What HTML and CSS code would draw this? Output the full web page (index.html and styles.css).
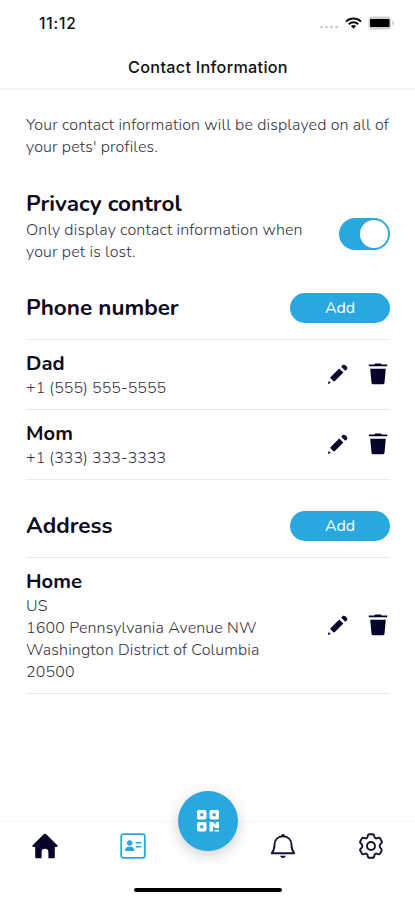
FILE: index.html
```html
<!DOCTYPE html>
<html lang="en">
<head>
<meta charset="utf-8">
<title>Contact Information</title>
<link rel="stylesheet" href="styles.css">
</head>
<body>
<svg class="symbols" aria-hidden="true">
  <symbol id="pencil" viewBox="0 0 22 22">
    <path d="M3.700 13.900 12.200 5.400l4.200 4.200-8.500 8.500a1.200 1.200 0 0 1-1.700 0l-2.500-2.500a1.200 1.200 0 0 1 0-1.700z"/>
    <path d="m14.200 3.700 1.500-1.600c1.800-1.700 6 2.400 4.200 4.200l-1.600 1.500z"/>
    <path d="m.8 21 .9-3 2.100 2.100z"/>
  </symbol>
  <symbol id="trash" viewBox="0 0 20 22">
    <path d="M.8 1.500h5.500L7.200.6h5.600l.9.900h5.500v1.700H.8zM2.200 5.700h15.600l-1.300 14.100a1.700 1.700 0 0 1-1.700 1.500H5.200a1.700 1.700 0 0 1-1.700-1.500z"/>
  </symbol>
</svg>
<div class="screen">
  <header class="header">
    <div class="status">
      <span class="time">11:12</span>
      <div class="signals">
        <svg class="dots" viewBox="0 0 20 4"><circle cx="2.500" cy="2" r="1.300"/><circle cx="7.500" cy="2" r="1.300"/><circle cx="12.500" cy="2" r="1.300"/><circle cx="17.500" cy="2" r="1.300"/></svg>
        <svg class="wifi" viewBox="0 0 17 12"><path d="M1 4.600a10.800 10.800 0 0 1 15 0M3.700 7.200a7 7 0 0 1 9.600 0"/><path class="solid" d="m8.500 11.800-2.600-2.700a3.800 3.800 0 0 1 5.200 0z"/></svg>
        <svg class="battery" viewBox="0 0 27 14"><rect class="shell" x=".5" y=".5" width="22.500" height="13" rx="3.500"/><rect x="2" y="3" width="19.500" height="8" rx="1"/><path class="shell" d="M24.200 4.500c2.400.7 2.400 4.300 0 5z"/></svg>
      </div>
    </div>
    <h1 class="title">Contact Information</h1>
  </header>
  <main class="content">
    <p class="text">Your contact information will be displayed on all of<br>your pets' profiles.</p>
    <section class="privacy">
      <div>
        <h2 class="heading">Privacy control</h2>
        <p class="text">Only display contact information when<br>your pet is lost.</p>
      </div>
      <div class="toggle"><span class="knob"></span></div>
    </section>
    <section class="group">
      <div class="group-head"><h2 class="heading">Phone number</h2><button class="add">Add</button></div>
      <div class="entry">
        <div><h3 class="name">Dad</h3><p class="text number">+1 (555) 555-5555</p></div>
        <div class="actions"><svg class="pencil"><use href="#pencil"/></svg><svg class="trash"><use href="#trash"/></svg></div>
      </div>
      <div class="entry">
        <div><h3 class="name">Mom</h3><p class="text number">+1 (333) 333-3333</p></div>
        <div class="actions"><svg class="pencil"><use href="#pencil"/></svg><svg class="trash"><use href="#trash"/></svg></div>
      </div>
    </section>
    <section class="group address">
      <div class="group-head"><h2 class="heading">Address</h2><button class="add">Add</button></div>
      <div class="entry home">
        <div><h3 class="name">Home</h3><p class="text">US<br>1600 Pennsylvania Avenue NW<br>Washington District of Columbia<br>20500</p></div>
        <div class="actions"><svg class="pencil"><use href="#pencil"/></svg><svg class="trash"><use href="#trash"/></svg></div>
      </div>
    </section>
  </main>
  <nav class="tabs">
    <div class="tab-row">
      <svg class="tab" viewBox="0 0 26 26"><path fill="#06042b" d="M12 1.100a1.500 1.500 0 0 1 2 0l11.300 11.200c.7.700.3 1.600-.7 1.600h-1.800v10c0 .9-.5 1.400-1.400 1.400h-5v-6.100a3.400 3.400 0 0 0-6.800 0v6.100h-5c-.9 0-1.400-.5-1.400-1.400v-10H1.400c-1 0-1.400-.9-.7-1.600z"/></svg>
      <svg class="tab blue" viewBox="0 0 26 26"><rect x="1.200" y="1.200" width="23.600" height="23.600" rx="2" fill="none" stroke="currentColor" stroke-width="1.800"/><circle cx="9.700" cy="9.900" r="2.700"/><path d="M5 18c0-2.600 1.600-4.400 4.700-4.400s4.700 1.800 4.700 4.400z"/><path d="M15.700 9h5.600v1.600h-5.600zm0 3.900h5.600v1.500h-5.600z"/></svg>
      <div class="scan">
        <svg viewBox="0 0 24 24"><path fill="#fff" fill-rule="evenodd" d="M3 1h5.500a2 2 0 0 1 2 2v5.500a2 2 0 0 1-2 2H3a2 2 0 0 1-2-2V3a2 2 0 0 1 2-2zm1.300 3.300v2.900h2.900V4.300zM15.500 1H21a2 2 0 0 1 2 2v5.500a2 2 0 0 1-2 2h-5.500a2 2 0 0 1-2-2V3a2 2 0 0 1 2-2zm1.300 3.300v2.900h2.900V4.300zM3 13h5.500a2 2 0 0 1 2 2v5.500a2 2 0 0 1-2 2H3a2 2 0 0 1-2-2V15a2 2 0 0 1 2-2zm1.300 3.300v2.900h2.900v-2.900zM13.500 13h3.500l2.700 3V13H23v6.300h-3.200l-2.800-2v5.200h-3.500zM18.500 20.900H23v1.700h-4.500z"/></svg>
      </div>
      <svg class="tab line" viewBox="0 0 26 26"><path d="M1.700 20.300h22.600c-2.800-3.100-2.700-5.600-2.800-8.500-.2-5-3.500-8.500-8.500-8.500s-8.300 3.500-8.500 8.500c-.1 2.900 0 5.400-2.800 8.500z"/><path class="fill" d="M11 3a2 2 0 0 1 4 0zM10.100 22.700h5.800a3 3 0 0 1-5.800 0z"/></svg>
      <svg class="tab line" viewBox="0 0 26 26"><path d="M9.600 3.700C9.800 1.900 10.500 1.200 11.500 1.200h3c1 0 1.700.7 1.900 2.500.2 1.400 1.400 2.100 2.700 1.500 1.700-.7 2.600-.4 3.100.4l1.500 2.600c.5.900.2 1.800-1.200 2.900-1.100.9-1.100 2.900 0 3.800 1.400 1.100 1.700 2 1.200 2.900l-1.500 2.600c-.5.800-1.400 1.100-3.100.4-1.300-.6-2.500.1-2.700 1.500-.2 1.800-.9 2.500-1.900 2.500h-3c-1 0-1.700-.7-1.900-2.500-.2-1.400-1.400-2.100-2.700-1.500-1.700.7-2.600.4-3.100-.4l-1.500-2.600c-.5-.9-.2-1.800 1.200-2.900 1.100-.9 1.100-2.900 0-3.800C2.100 10 1.800 9.100 2.300 8.200l1.500-2.600c.5-.8 1.400-1.100 3.100-.4 1.300.6 2.500-.1 2.700-1.500z"/><circle cx="13" cy="13" r="4"/></svg>
    </div>
    <div class="home-bar"></div>
  </nav>
</div>
</body>
</html>
```
FILE: styles.css
```css
* { box-sizing: border-box; }
body, h1, h2, h3, p { margin: 0; }
body { background: #fff; color: #0d0b20; font-family: Nunito, Lato, sans-serif; }
.symbols { position: absolute; width: 0; height: 0; }
svg { display: block; flex: none; }
.screen { width: 415px; height: 900px; display: flex; flex-direction: column; background: #fefefe; overflow: hidden; }

.header { height: 90px; border-bottom: 2px solid #f5f5f5; font-family: Inter, sans-serif; color: #111; flex: none; }
.status { height: 46px; padding: 0 20px 0 39px; display: flex; justify-content: space-between; align-items: center; }
.time { font-size: 15.5px; font-weight: 500; letter-spacing: .8px; }
.signals { display: flex; align-items: center; gap: 6px; }
.dots { width: 20px; height: 4px; margin-top: 8px; fill: #c8c8c8; }
.wifi { width: 17px; height: 12px; fill: none; stroke: #111; stroke-width: 2; }
.wifi .solid { fill: #111; stroke: none; }
.battery { width: 27px; height: 14px; fill: #000; }
.battery .shell { fill: #cfcfcf; }
.title { padding-left: 1px; font-size: 16.2px; line-height: 42px; font-weight: 500; text-align: center; letter-spacing: .3px; }

.content { flex: 1; padding: 24px 25px 0 26px; }
.text { font-size: 16px; line-height: 22px; font-weight: 300; color: #353344; white-space: nowrap; letter-spacing: .14px; }
.number { letter-spacing: .04px; }
.privacy { margin-top: 32px; display: flex; justify-content: space-between; }
.heading { font-size: 22.5px; line-height: 28px; font-weight: 700; white-space: nowrap; }
.privacy .text { margin-top: 1px; }
.toggle { width: 51px; height: 32px; margin-top: 28px; padding: 2px; border-radius: 16px; background: #29a8e0; display: flex; justify-content: flex-end; }
.knob { width: 28px; height: 28px; border-radius: 50%; background: #fff; }
.group { margin-top: 30px; }
.group.address { margin-top: 31px; }
.group-head { height: 47px; display: flex; justify-content: space-between; align-items: flex-start; border-bottom: 1px solid #e9e9e9; }
.group-head .heading { line-height: 30px; }
.add { width: 100px; height: 30px; padding: 0; border: 0; border-radius: 15px; background: #29a8e0; color: #fff; font: 400 16px/30px Nunito, Lato, sans-serif; }
.entry { height: 70px; padding: 11px 2px 0 0; display: flex; justify-content: space-between; border-bottom: 1px solid #e9e9e9; }
.name { font-size: 20.2px; line-height: 25px; font-weight: 700; margin-bottom: 1px; }
.actions { display: flex; gap: 19px; padding-top: 12px; }
.pencil { width: 22px; height: 22px; fill: #06042b; }
.trash { width: 20px; height: 22px; fill: #06042b; }
.entry.home { height: 136px; }
.home .actions { padding-top: 45px; }

.tabs { height: 79px; border-top: 1px solid #f7f7f7; flex: none; }
.tab-row { height: 66px; padding: 11px 31px 0 32px; display: grid; grid-template-columns: 26px 26px 0 26px 26px; justify-content: space-between; }
.tab { width: 26px; height: 26px; }
.blue { color: #29a8e0; fill: currentColor; }
.line { fill: none; stroke: #151331; stroke-width: 1.9; stroke-linejoin: round; }
.line .fill { fill: #151331; stroke: none; }
.scan { width: 60px; height: 60px; margin: -42px 0 0 -30px; border-radius: 50%; background: #29a8e0; box-shadow: 0 4px 14px rgba(0,0,0,.18); display: grid; place-items: center; }
.scan svg { width: 24px; height: 24px; }
.home-bar { width: 148px; height: 4px; margin: 0 auto; border-radius: 2px; background: #000; }
```
